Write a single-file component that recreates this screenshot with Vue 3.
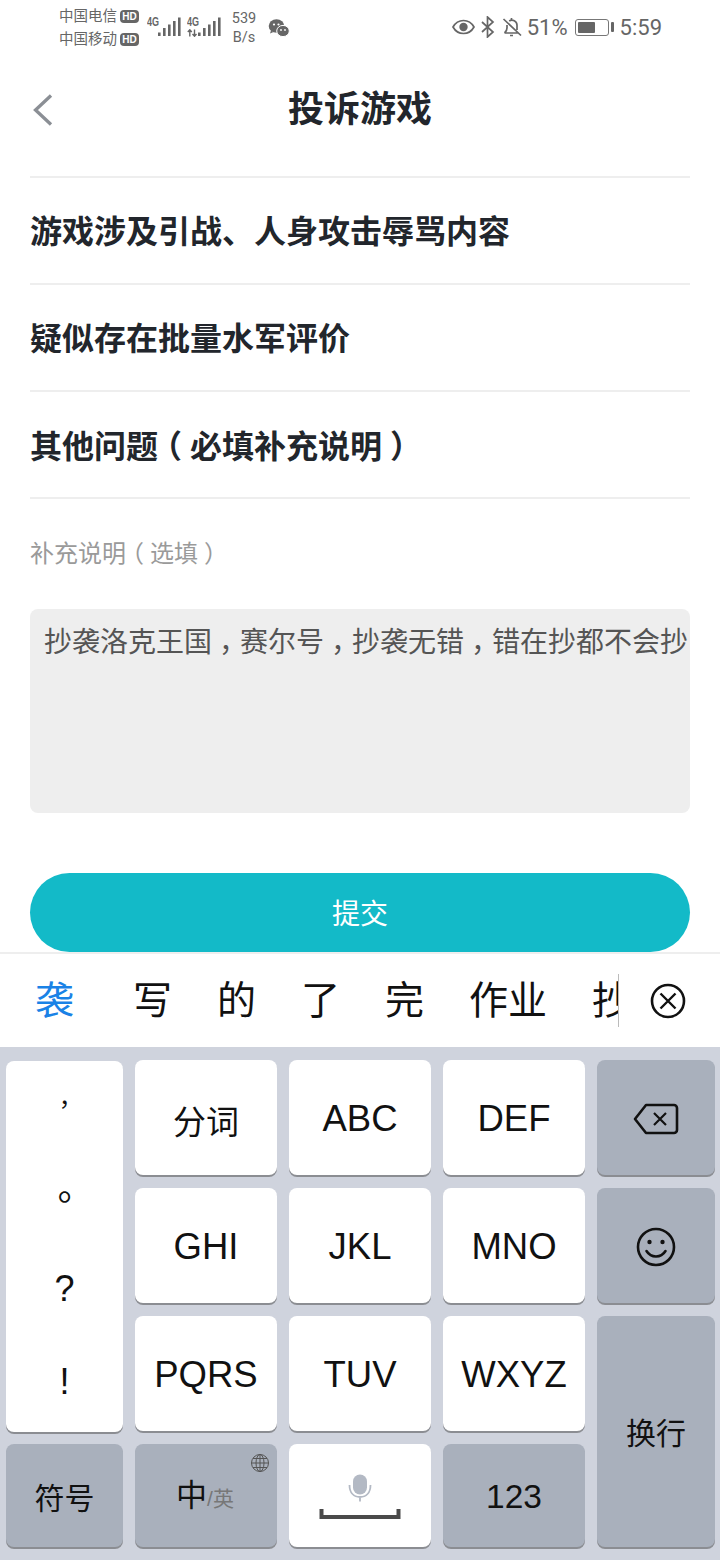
<script setup>
const candidates = ['写', '的', '了', '完', '作业', '抄']
const letterKeys = [
  { t: '分词', cls: 'cjk' }, { t: 'ABC' }, { t: 'DEF' },
  { t: 'GHI' }, { t: 'JKL' }, { t: 'MNO' },
  { t: 'PQRS' }, { t: 'TUV' }, { t: 'WXYZ' }
]
const areas = ['b', 'c', 'd', 'f', 'g', 'h', 'j', 'k', 'l']
</script>

<template>
  <div class="page">
    <header class="status">
      <div class="carriers">
        <div class="carrier">中国电信<span class="hd">HD</span></div>
        <div class="carrier">中国移动<span class="hd">HD</span></div>
      </div>
      <div class="signal">
        <span class="g">4G</span>
        <svg width="23" height="20" viewBox="0 0 23 20"><path d="M0 15.500h2.600V19H0zM5 11h2.600v8H5zM10 7.500h2.600V19H10zM15 4h2.600v15H15zM20 .5h2.600V19H20z" fill="#666"/></svg>
      </div>
      <div class="signal second">
        <span class="g">4G</span>
        <svg class="arrows" width="11" height="8" viewBox="0 0 11 8"><path d="M2.800 7.500V1M.8 3L2.800.8 4.800 3M7.500.5V7M5.500 5l2 2.200 2-2.200" fill="none" stroke="#666" stroke-width="1.400"/></svg>
        <svg width="23" height="20" viewBox="0 0 23 20"><path d="M0 15.500h2.600V19H0zM5 11h2.600v8H5zM10 7.500h2.600V19H10zM15 4h2.600v15H15zM20 .5h2.600V19H20z" fill="#666"/></svg>
      </div>
      <div class="speed"><span>539</span><span>B/s</span></div>
      <svg class="wechat" width="22" height="20" viewBox="0 0 22 20">
        <ellipse cx="8.500" cy="8" rx="7.800" ry="6.800" fill="#666"/>
        <path d="M3 12.500l-1 3 3.500-1.500z" fill="#666"/>
        <ellipse cx="15" cy="13" rx="6.300" ry="5.600" fill="#666" stroke="#fff" stroke-width="1"/>
        <circle cx="6" cy="6.500" r="1.100" fill="#fff"/><circle cx="10.500" cy="6.500" r="1.100" fill="#fff"/>
        <circle cx="13" cy="12" r=".9" fill="#fff"/><circle cx="17" cy="12" r=".9" fill="#fff"/>
      </svg>
      <div class="spacer"></div>
      <svg width="23" height="16" viewBox="0 0 23 16" class="st-icon eye">
        <path d="M1 8c2.500-4.500 6-6.500 10.500-6.500S19.500 3.500 22 8c-2.500 4.500-6 6.500-10.500 6.500S3.500 12.500 1 8z" fill="none" stroke="#666" stroke-width="1.700"/>
        <circle cx="11.500" cy="8" r="4.200" fill="#666"/>
      </svg>
      <svg width="15" height="22" viewBox="0 0 15 22" class="st-icon bt">
        <path d="M2 6l11 10-5.500 5V1L13 6 2 16" fill="none" stroke="#666" stroke-width="1.700"/>
      </svg>
      <svg width="20" height="20" viewBox="0 0 20 20" class="st-icon bell">
        <path d="M2.500 16h13M2.500 16c1.700-1.500 2.500-3 2.500-5V8M15 13V8a5 5 0 0 0-7.800-4M9.500 2.500V1M8 18.500h3M1.500 2L19 18.500" fill="none" stroke="#666" stroke-width="1.700"/>
      </svg>
      <span class="pct">51%</span>
      <div class="battery"><div class="level"></div></div>
      <div class="nub"></div>
      <span class="time">5:59</span>
    </header>

    <div class="nav">
      <svg class="back" width="30" height="40" viewBox="0 0 30 40"><path d="M23 5.500L7.500 20 23 34.500" fill="none" stroke="#8b8f95" stroke-width="3.300"/></svg>
      <h1>投诉游戏</h1>
    </div>

    <main class="content">
      <ul class="options">
        <li>游戏涉及引战、人身攻击辱骂内容</li>
        <li>疑似存在批量水军评价</li>
        <li>其他问题<span class="mark">（</span>必填补充说明<span class="mark">）</span></li>
      </ul>
      <p class="label">补充说明<span class="mark">（</span>选填<span class="mark">）</span></p>
      <div class="textarea">抄袭洛克王国<span class="mark">，</span>赛尔号<span class="mark">，</span>抄袭无错<span class="mark">，</span>错在抄都不会抄</div>
      <button class="submit">提交</button>
    </main>

    <div class="candidates">
      <div class="list">
        <span class="active">袭</span>
        <span v-for="c in candidates" :key="c">{{ c }}</span>
      </div>
      <svg width="36" height="36" viewBox="0 0 36 36" class="close">
        <circle cx="18" cy="18" r="16" fill="none" stroke="#111" stroke-width="2.600"/>
        <path d="M10.500 10.500l15 15M25.500 10.500l-15 15" stroke="#111" stroke-width="2.400"/>
      </svg>
    </div>

    <div class="keyboard">
      <div class="key punct">
        <span class="tc small">，</span><span class="tc">。</span><span>?</span><span>!</span>
      </div>
      <div v-for="(k, i) in letterKeys" :key="k.t" class="key" :class="k.cls" :style="{ gridArea: areas[i] }">{{ k.t }}</div>
      <div class="key dark a-back">
        <svg width="46" height="34" viewBox="0 0 46 34">
          <path d="M13 3h28a3 3 0 0 1 3 3v22a3 3 0 0 1-3 3H13L2 17z" fill="none" stroke="#111" stroke-width="2.600" stroke-linejoin="round"/>
          <path d="M21 11l12 12M33 11L21 23" stroke="#111" stroke-width="2.200"/>
        </svg>
      </div>
      <div class="key dark a-emoji">
        <svg width="42" height="42" viewBox="0 0 42 42">
          <circle cx="21" cy="21" r="18" fill="none" stroke="#111" stroke-width="2.600"/>
          <circle cx="14.500" cy="16" r="2.200" fill="#111"/><circle cx="27.500" cy="16" r="2.200" fill="#111"/>
          <path d="M11.500 25c2.500 4 5.500 5.500 9.500 5.500s7-1.500 9.500-5.500" fill="none" stroke="#111" stroke-width="2.600" stroke-linecap="round"/>
        </svg>
      </div>
      <div class="key dark a-enter"><span>换行</span></div>
      <div class="key dark a-sym">符号</div>
      <div class="key dark a-lang">
        <span class="zh">中</span><span class="en">/英</span>
        <svg class="globe" width="20" height="20" viewBox="0 0 20 20">
          <g fill="none" stroke="#555" stroke-width="1">
            <circle cx="10" cy="10" r="8.500"/><ellipse cx="10" cy="10" rx="4" ry="8.500"/>
            <path d="M10 1.500v17M1.500 10h17M3 5.500h14M3 14.500h14"/>
          </g>
        </svg>
      </div>
      <div class="key a-space">
        <svg width="82" height="50" viewBox="0 0 82 50">
          <rect x="34" y="3.500" width="14" height="20" rx="7" fill="#b3b9c4"/>
          <path d="M30.500 14c0 8 4.500 12 10.500 12s10.500-4 10.500-12M41 26v4.500" fill="none" stroke="#b3b9c4" stroke-width="1.800"/>
          <path d="M2.500 38v8h77v-8" fill="none" stroke="#4a4a4a" stroke-width="4"/>
        </svg>
      </div>
      <div class="key dark a-num">123</div>
    </div>
  </div>
</template>

<style>
html, body { margin: 0; background: #fff; }
</style>

<style scoped>
.page {
  width: 720px;
  height: 1560px;
  display: flex;
  flex-direction: column;
  overflow: hidden;
  background: #fff;
  font-family: "Liberation Sans", "Noto Sans CJK SC", sans-serif;
  color: #22262c;
}
.tc { font-family: "Noto Sans CJK TC", sans-serif; }
.mark { font-feature-settings: "halt"; padding: 0 .25em; }

.status {
  height: 56px;
  flex: none;
  display: flex;
  align-items: center;
  padding: 0 58px 0 59px;
  box-sizing: border-box;
  color: #666;
  font-family: Roboto, "Noto Sans CJK SC", sans-serif;
}
.carriers { display: flex; flex-direction: column; gap: 4px; margin-bottom: 1px; width: 82px; flex: none; }
.carrier { font-size: 14.500px; line-height: 19px; display: flex; align-items: center; white-space: nowrap; height: 19px; }
.hd {
  margin-left: 3px;
  background: #666;
  color: #fff;
  font: 700 10px/13px "Liberation Sans", sans-serif;
  border-radius: 4px;
  height: 13px;
  width: 19px;
  text-align: center;
}
.signal { position: relative; width: 34px; height: 20px; margin-left: 6px; margin-bottom: 3px; flex: none; }
.signal.second { margin-left: 6px; }
.g {
  position: absolute;
  left: 0;
  top: 0;
  font: 700 12px/10px "Liberation Sans", sans-serif;
  color: #666;
  white-space: nowrap;
  transform: scaleX(.75);
  transform-origin: left top;
}
.arrows { position: absolute; left: 0; top: 12px; }
.signal svg:last-child { position: absolute; right: 0; top: 0; }
.speed {
  display: flex;
  flex-direction: column;
  align-items: center;
  font-size: 14.500px;
  line-height: 19px;
  margin: 0 0 0 9px;
  width: 28px;
  flex: none;
}
.wechat { margin-left: 10px; flex: none; }
.spacer { flex: 1; }
.st-icon { flex: none; }
.eye { margin-right: 5px; margin-bottom: 2px; }
.bt { margin-right: 7px; margin-bottom: 2px; }
.bell { margin-right: 5px; margin-bottom: 2px; }
.pct { font-size: 22px; line-height: 26px; margin-right: 7px; }
.battery {
  width: 34px;
  height: 17px;
  border: 1.300px solid #777;
  border-radius: 3px;
  padding: 2px;
  box-sizing: border-box;
  margin-bottom: 2px;
}
.level { width: 17px; height: 100%; background: #666; border-radius: 1px; }
.nub { width: 3px; height: 10px; background: #666; margin: 0 0 2px 2px; border-radius: 1px; }
.time { font-size: 22px; line-height: 26px; margin-left: 6px; }

.nav {
  height: 106px;
  flex: none;
  position: relative;
  display: flex;
  justify-content: center;
  align-items: center;
}
.nav h1 { margin: 0; font-size: 36px; font-weight: 700; line-height: 48px; padding-top: 2px; }
.back { position: absolute; left: 28px; top: 34px; }

.content { flex: 1; padding: 14px 30px 0; display: flex; flex-direction: column; min-height: 0; }
.options { list-style: none; margin: 0; padding: 0; }
.options li {
  height: 107px;
  box-sizing: border-box;
  border-top: 2px solid #eeeeee;
  padding-top: 3px;
  font-size: 32px;
  font-weight: 700;
  line-height: 102px;
  white-space: nowrap;
}
.options li:last-child { border-bottom: 2px solid #eeeeee; height: 109px; padding-top: 4px; }
.label { margin: 0; font-size: 24px; line-height: 34px; color: #9a9a9a; padding-top: 38px; }
.textarea {
  margin-top: 38px;
  height: 204px;
  background: #eeeeee;
  border-radius: 8px;
  padding: 16px 0 0 14px;
  box-sizing: border-box;
  font-size: 28px;
  line-height: 36px;
  color: #555;
  white-space: nowrap;
  overflow: hidden;
}
.submit {
  margin-top: 60px;
  height: 79px;
  flex: none;
  border: 0;
  border-radius: 40px;
  background: #13bac8;
  color: #fff;
  font: inherit;
  font-size: 28px;
  line-height: 36px;
  padding: 4px 0 0;
}

.candidates {
  height: 95px;
  flex: none;
  border-top: 2px solid #eeeeee;
  box-sizing: border-box;
  display: flex;
  align-items: center;
  padding-left: 35px;
  background: #fff;
}
.list {
  width: 584px;
  height: 53px;
  box-sizing: border-box;
  display: flex;
  gap: 45px;
  overflow: hidden;
  border-right: 1px solid #bbb;
  font-size: 39px;
  line-height: 53px;
  color: #111;
  white-space: nowrap;
}
.list span { flex: none; }
.active { color: #1a82e6; margin-right: 14px; }
.close { margin-left: 31px; }

.keyboard {
  height: 513px;
  flex: none;
  box-sizing: border-box;
  background: #cfd3dd;
  padding: 13px 5px 13px 6px;
  display: grid;
  grid-template-columns: 117px 142px 142px 142px 118px;
  grid-template-rows: 115px 115px 115px 103px;
  column-gap: 12px;
  row-gap: 13px;
  grid-template-areas:
    "a b c d e"
    "a f g h m"
    "a j k l n"
    "s t u v n";
}
.key {
  background: #fff;
  border-radius: 8px;
  box-shadow: 0 2px 0 #8b8d92;
  display: flex;
  align-items: center;
  justify-content: center;
  font-size: 36.500px;
  color: #111;
  white-space: nowrap;
  padding-top: 2px;
  box-sizing: border-box;
}
.cjk { font-size: 33px; padding-top: 4px; }
.dark { background: #a9b0bc; }
.punct {
  grid-area: a;
  flex-direction: column;
  justify-content: flex-start;
  font-size: 36px;
  margin-top: 1px;
  height: 371px;
  padding: 0;
}
.punct span { height: 83px; padding-bottom: 10px; line-height: 83px; flex: none; }
.punct .small { font-size: 24px; }
.a-back { grid-area: e; }
.a-emoji { grid-area: m; }
.a-enter { grid-area: n; font-size: 30px; line-height: 40px; align-items: flex-start; padding-top: 98px; }
.a-sym { grid-area: s; font-size: 30px; padding-top: 0; }
.a-lang { grid-area: t; position: relative; align-items: baseline; padding: 26px 2px 0 0; }
.a-space { grid-area: u; padding: 0; }
.a-num { grid-area: v; font-size: 33.500px; }
.zh { font-size: 31px; }
.en { font-size: 21px; color: #777; }
.globe { position: absolute; top: 9px; right: 7px; }
</style>
